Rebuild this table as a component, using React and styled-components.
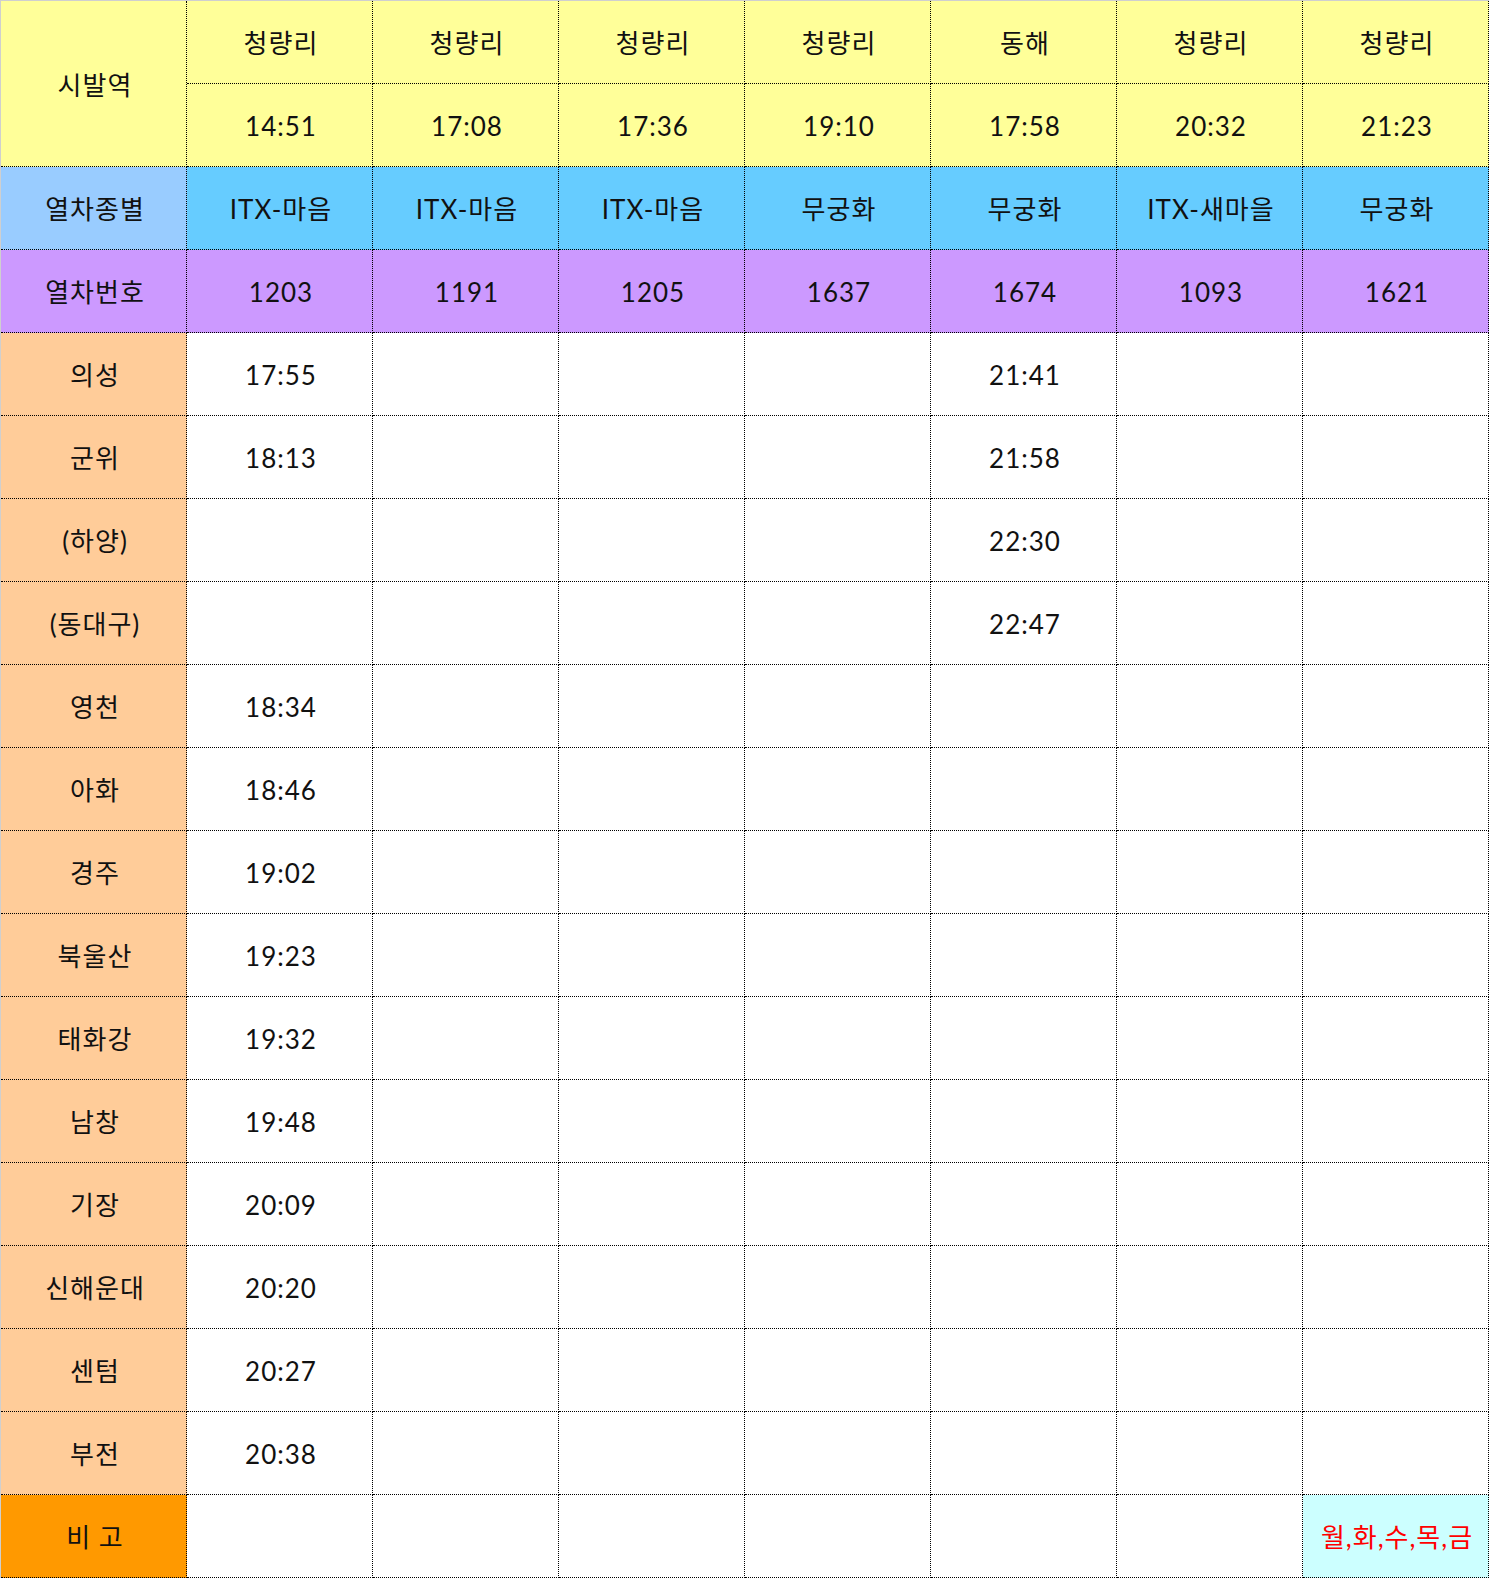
import React from 'react';
import styled, { createGlobalStyle } from 'styled-components';

const GlobalStyle = createGlobalStyle`
  html, body {
    margin: 0;
    padding: 0;
    background: #ffffff;
  }
  body {
    font-family: Lato, "Noto Sans CJK KR", sans-serif;
  }
`;

const Grid = styled.div`
  display: grid;
  grid-template-columns: repeat(8, 186px);
  grid-auto-rows: 83px;
  width: max-content;
  border-top: 1px solid #cfcfcf;
  border-left: 1px solid #cfcfcf;
`;

const Cell = styled.div`
  box-sizing: border-box;
  display: flex;
  align-items: center;
  justify-content: center;
  border-right: 1px dotted #000;
  border-bottom: 1px dotted #000;
  background: ${(p) => p.$bg || '#ffffff'};
  color: ${(p) => p.$color || '#111'};
  font-size: 26px;
  letter-spacing: 1px;
  line-height: 1;
  padding: 2px 0 0 3px;
  grid-row: ${(p) => (p.$span ? `span ${p.$span}` : 'auto')};
`;

const origins = ['청량리', '청량리', '청량리', '청량리', '동해', '청량리', '청량리'];
const departs = ['14:51', '17:08', '17:36', '19:10', '17:58', '20:32', '21:23'];
const kinds = ['ITX-마음', 'ITX-마음', 'ITX-마음', '무궁화', '무궁화', 'ITX-새마을', '무궁화'];
const numbers = ['1203', '1191', '1205', '1637', '1674', '1093', '1621'];

const stops = [
  ['의성', ['17:55', '', '', '', '21:41', '', '']],
  ['군위', ['18:13', '', '', '', '21:58', '', '']],
  ['(하양)', ['', '', '', '', '22:30', '', '']],
  ['(동대구)', ['', '', '', '', '22:47', '', '']],
  ['영천', ['18:34']],
  ['아화', ['18:46']],
  ['경주', ['19:02']],
  ['북울산', ['19:23']],
  ['태화강', ['19:32']],
  ['남창', ['19:48']],
  ['기장', ['20:09']],
  ['신해운대', ['20:20']],
  ['센텀', ['20:27']],
  ['부전', ['20:38']],
];

const YELLOW = '#ffff99';
const SKY = '#99ccff';
const BLUE = '#66ccff';
const PURPLE = '#cc99ff';
const PEACH = '#ffcc99';
const ORANGE = '#ff9900';
const ICE = '#ccffff';

const App = () => {
  return (
    <>
      <GlobalStyle />
      <Grid>
        <Cell $bg={YELLOW} $span={2}>시발역</Cell>
        {origins.map((o, i) => (
          <Cell key={'o' + i} $bg={YELLOW}>{o}</Cell>
        ))}
        {departs.map((d, i) => (
          <Cell key={'d' + i} $bg={YELLOW}>{d}</Cell>
        ))}

        <Cell $bg={SKY}>열차종별</Cell>
        {kinds.map((k, i) => (
          <Cell key={'k' + i} $bg={BLUE}>{k}</Cell>
        ))}

        <Cell $bg={PURPLE}>열차번호</Cell>
        {numbers.map((n, i) => (
          <Cell key={'n' + i} $bg={PURPLE}>{n}</Cell>
        ))}

        {stops.map(([name, times]) => (
          <React.Fragment key={name}>
            <Cell $bg={PEACH}>{name}</Cell>
            {Array.from({ length: 7 }).map((_, i) => (
              <Cell key={i}>{times[i] || ''}</Cell>
            ))}
          </React.Fragment>
        ))}

        <Cell $bg={ORANGE}>비 고</Cell>
        {Array.from({ length: 6 }).map((_, i) => (
          <Cell key={'r' + i} />
        ))}
        <Cell $bg={ICE} $color="#ff0000">월,화,수,목,금</Cell>
      </Grid>
    </>
  );
};

export default App;
